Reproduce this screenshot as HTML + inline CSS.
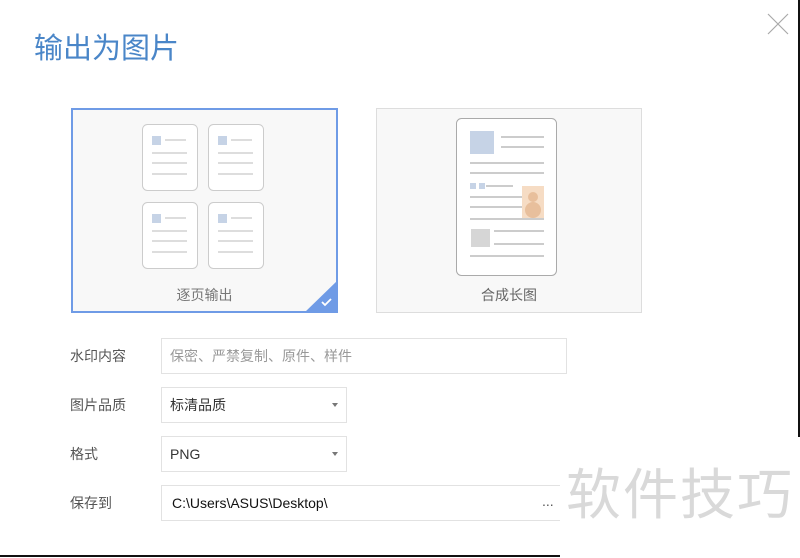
<!DOCTYPE html>
<html><head><meta charset="utf-8"><style>
body{margin:0;width:800px;height:558px;background:#fff;position:relative;overflow:hidden;font-family:"Liberation Sans","Noto Sans CJK SC",sans-serif;}
.a{position:absolute}
.title{left:34px;top:25px;font-size:29px;color:#4a86c8;letter-spacing:0px}
.card{box-sizing:border-box;background:#f8f8f8}
.lbl{font-size:14px;color:#555}
.inp{box-sizing:border-box;border:1px solid #e2e2e2;background:#fff;font-size:14px;color:#333;padding-left:8px;line-height:35px}
.arr{position:absolute;right:8px;top:15px;width:0;height:0;border-left:3px solid transparent;border-right:3px solid transparent;border-top:4px solid #777}
</style></head><body>
<div class="a title">输出为图片</div>
<svg class="a" style="left:767px;top:13px" width="22" height="22"><path d="M1 1L21 21M21 1L1 21" stroke="#aaa" stroke-width="1.2"/></svg>

<div class="a card" style="left:71px;top:108px;width:267px;height:205px;border:2px solid #6f9be6"></div>
<svg class="a" style="left:71px;top:108px" width="267" height="205">
<g fill="#fff" stroke="#ccc" stroke-width="1">
<rect x="71.5" y="16.5" width="55" height="66" rx="5"/><rect x="137.5" y="16.5" width="55" height="66" rx="5"/>
<rect x="71.5" y="94.5" width="55" height="66" rx="5"/><rect x="137.5" y="94.5" width="55" height="66" rx="5"/>
</g>
<g fill="#c6d3e6"><rect x="81" y="28" width="9" height="9"/><rect x="147" y="28" width="9" height="9"/><rect x="81" y="106" width="9" height="9"/><rect x="147" y="106" width="9" height="9"/></g>
<g stroke="#ddd" stroke-width="2">
<path d="M94 32h21M81 45h35M81 55h35M81 66h35"/>
<path d="M160 32h21M147 45h35M147 55h35M147 66h35"/>
<path d="M94 110h21M81 123h35M81 133h35M81 144h35"/>
<path d="M160 110h21M147 123h35M147 133h35M147 144h35"/>
</g>
<path d="M267 172V205H233Z" fill="#6f9be6"/>
<path d="M251 194l3 3 6-6" stroke="#fff" stroke-width="1.8" fill="none"/>
</svg>
<div class="a lbl" style="left:71px;top:285px;width:267px;text-align:center;color:#777">逐页输出</div>

<div class="a card" style="left:376px;top:108px;width:266px;height:205px;border:1px solid #ddd"></div>
<svg class="a" style="left:376px;top:108px" width="266" height="205">
<rect x="80.5" y="10.5" width="100" height="157" rx="5" fill="#fff" stroke="#aaa"/>
<rect x="94" y="23" width="24" height="23" fill="#c6d3e6"/>
<g stroke="#ccc" stroke-width="2">
<path d="M125 29h43M125 39h43M94 55h74M94 65h74M110 78h27M94 89h53M94 99h53M94 111h74M118 123h50M118 136h50M94 148h74"/>
</g>
<rect x="94" y="75" width="6" height="6" fill="#c6d3e6"/><rect x="103" y="75" width="6" height="6" fill="#c6d3e6"/>
<rect x="146" y="78" width="22" height="32" fill="#f6dcc4"/>
<circle cx="157" cy="89" r="5" fill="#e8bf9c"/><circle cx="157" cy="102" r="8" fill="#e8bf9c"/>
<rect x="95" y="121" width="19" height="18" fill="#d6d6d6"/>
</svg>
<div class="a lbl" style="left:376px;top:285px;width:266px;text-align:center;color:#666">合成长图</div>

<div class="a lbl" style="left:70px;top:346px">水印内容</div>
<div class="a inp" style="left:161px;top:338px;width:406px;height:36px;color:#999">保密、严禁复制、原件、样件</div>
<div class="a lbl" style="left:70px;top:395px">图片品质</div>
<div class="a inp" style="left:161px;top:387px;width:186px;height:36px">标清品质<div class="arr"></div></div>
<div class="a lbl" style="left:70px;top:444px">格式</div>
<div class="a inp" style="left:161px;top:436px;width:186px;height:36px">PNG<div class="arr"></div></div>
<div class="a lbl" style="left:70px;top:493px">保存到</div>
<div class="a inp" style="left:161px;top:485px;width:420px;height:36px;color:#111;padding-left:10px">C:\Users\ASUS\Desktop\<span style="position:absolute;left:380px;top:-2px;color:#555">...</span></div>
<div class="a" style="left:560px;top:462px;width:240px;height:70px;background:#fff"></div>
<div class="a" style="left:566px;top:462px;font-size:55px;color:#d9d9d9;line-height:66px;letter-spacing:2px">软件技巧</div>
<div class="a" style="left:798px;top:0;width:2px;height:437px;background:#111"></div>
<div class="a" style="left:0;top:555px;width:560px;height:2px;background:#111"></div>
</body></html>
